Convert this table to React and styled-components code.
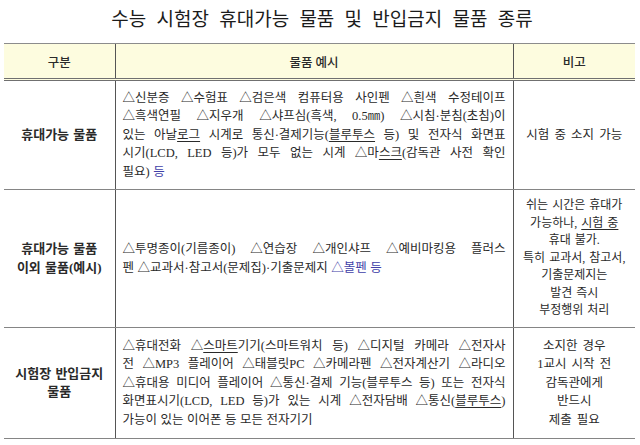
import React from 'react';
import styled, { createGlobalStyle } from 'styled-components';

const GlobalStyle = createGlobalStyle`
  body {
    margin: 0;
    background: #ffffff;
    color: #2a2a2a;
    font-family: "Liberation Serif", "Noto Sans CJK KR", serif;
  }
`;

const Page = styled.div`
  width: 640px;
  height: 445px;
  overflow: hidden;
  padding-left: 4px;
  box-sizing: border-box;
`;

const Title = styled.h1`
  margin: 0;
  height: 43px;
  line-height: 35px;
  text-align: center;
  font-family: "Noto Sans CJK KR", sans-serif;
  font-size: 19px;
  font-weight: 400;
  word-spacing: 6px;
  color: #1b1b1b;
`;

const Table = styled.table`
  width: 631px;
  border-collapse: collapse;
  table-layout: fixed;
`;

const Col = styled.col`
  width: ${(p) => p.$w}px;
`;

const HeadCell = styled.th`
  height: 34px;
  padding: 0;
  background: #fdfcdf;
  border-top: 1px solid #8c8c8c;
  border-bottom: 3px double #707070;
  font-family: "Noto Sans CJK KR", sans-serif;
  font-size: 12.5px;
  font-weight: 500;
  color: #2a2a2a;
  & + & {
    border-left: 1px solid #555555;
  }
`;

const Row = styled.tr`
  height: ${(p) => p.$h}px;
`;

const Cell = styled.td`
  padding: 0 2px;
  border-bottom: 1.5px solid #858585;
  vertical-align: middle;
  text-align: center;
  font-size: ${(p) => (p.$small ? 12 : 12.5)}px;
  font-weight: 400;
  line-height: ${(p) => (p.$small ? 17.5 : 18.5)}px;
  word-spacing: ${(p) => (p.$small ? 1 : 2)}px;
  & + & {
    border-left: 1px solid #555555;
  }
`;

const LabelCell = styled(Cell)`
  font-size: 13px;
  font-weight: 700;
  word-spacing: 1px;
`;

const ItemsCell = styled(Cell)`
  padding: 0 7px;
  text-align: left;
  word-spacing: 0;
`;

const Line = styled.div`
  display: flex;
  justify-content: ${(p) => (p.$last ? 'flex-start' : 'space-between')};
  gap: ${(p) => (p.$last ? '3.5px' : '0')};
  white-space: nowrap;
`;

const Blue = styled.span`
  color: #3f3fa8;
`;

const U = styled.span`
  text-decoration: underline;
  text-underline-offset: 2px;
  text-decoration-thickness: 1px;
`;

// [..] = underline, {..} = blue
const renderWord = (w) =>
  w
    .split(/(\[[^\]]*\]|\{[^}]*\})/)
    .filter(Boolean)
    .map((p, i) => {
      if (p.startsWith('[')) return <U key={i}>{p.slice(1, -1)}</U>;
      if (p.startsWith('{')) return <Blue key={i}>{p.slice(1, -1)}</Blue>;
      return p;
    });

const Stack = ({ lines }) =>
  lines.map((l, i) => (
    <Line key={i} $last={i === lines.length - 1}>
      {l.split(' ').map((w, j) => (
        <span key={j}>{renderWord(w)}</span>
      ))}
    </Line>
  ));

const allowed = [
  '△신분증 △수험표 △검은색 컴퓨터용 사인펜 △흰색 수정테이프',
  '△흑색연필 △지우개 △샤프심(흑색, 0.5㎜) △시침·분침(초침)이',
  '있는 아날[로그] 시계로 통신·결제기능([블루투스] 등) 및 전자식 화면표',
  '시기(LCD, LED 등)가 모두 없는 시계 △마[스크](감독관 사전 확인',
  '필요) {등}',
];

const others = [
  '△투명종이(기름종이) △연습장 △개인샤프 △예비마킹용 플러스',
  '펜 △교과서·참고서(문제집)·기출문제지 {△볼펜} {등}',
];

const banned = [
  '△휴대전화 △[스마트]기기(스마트워치 등) △디지털 카메라 △전자사',
  '전 △MP3 플레이어 △태블릿PC △카메라펜 △전자계산기 △라디오',
  '△휴대용 미디어 플레이어 △통신·결제 기능(블루투스 등) 또는 전자식',
  '화면표시기(LCD, LED 등)가 있는 시계 △전자담배 △통신([블루투스])',
  '가능이 있는 이어폰 등 모든 전자기기',
];

export default function App() {
  return (
    <Page>
      <GlobalStyle />
      <Title>수능 시험장 휴대가능 물품 및 반입금지 물품 종류</Title>
      <Table>
        <colgroup>
          <Col $w={111} />
          <Col $w={398} />
          <Col $w={122} />
        </colgroup>
        <thead>
          <tr>
            <HeadCell>구분</HeadCell>
            <HeadCell>물품 예시</HeadCell>
            <HeadCell>비고</HeadCell>
          </tr>
        </thead>
        <tbody>
          <Row $h={110}>
            <LabelCell>휴대가능 물품</LabelCell>
            <ItemsCell>
              <Stack lines={allowed} />
            </ItemsCell>
            <Cell>시험 중 소지 가능</Cell>
          </Row>
          <Row $h={138}>
            <LabelCell>
              휴대가능 물품
              <br />
              이외 물품(예시)
            </LabelCell>
            <ItemsCell>
              <Stack lines={others} />
            </ItemsCell>
            <Cell $small>
              쉬는 시간은 휴대가
              <br />
              가능하나, <U>시험 중</U>
              <br />
              휴대 불가.
              <br />
              특히 교과서, 참고서,
              <br />
              기출문제지는
              <br />
              발견 즉시
              <br />
              부정행위 처리
            </Cell>
          </Row>
          <Row $h={111}>
            <LabelCell>
              시험장 반입금지
              <br />
              물품
            </LabelCell>
            <ItemsCell>
              <Stack lines={banned} />
            </ItemsCell>
            <Cell>
              소지한 경우
              <br />
              1교시 시작 전
              <br />
              감독관에게
              <br />
              반드시
              <br />
              제출 필요
            </Cell>
          </Row>
        </tbody>
      </Table>
    </Page>
  );
}
